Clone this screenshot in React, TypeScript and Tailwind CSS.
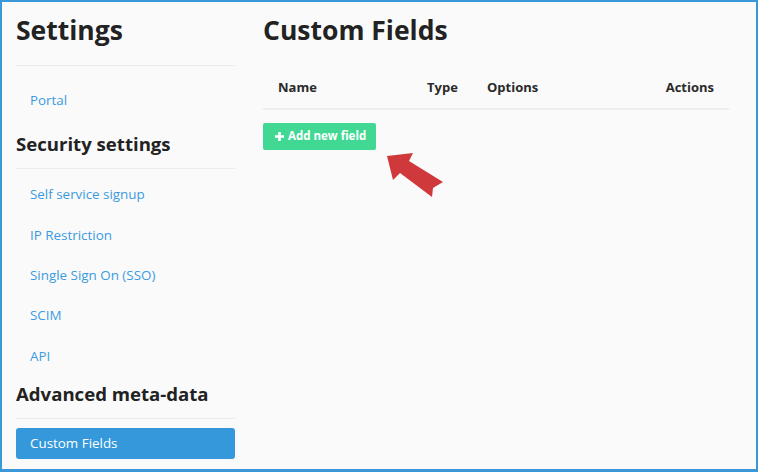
const SECURITY_LINKS = ["Self service signup", "IP Restriction", "Single Sign On (SSO)", "SCIM", "API"]

function SideLink({ label }: { label: string }) {
    return (
        <div className="flex h-[40.3px] items-center pl-[14px] text-[13.4px] leading-[20px] text-[#3a9be0]">
            {label}
        </div>
    )
}

function Divider() {
    return <div className="h-px w-full bg-[#ececec]" />
}

function Arrow() {
    // red annotation arrow pointing at the button
    return (
        <svg
            className="absolute left-[378px] top-[143px]"
            width="70"
            height="60"
            viewBox="0 0 70 60"
        >
            <polygon
                points="7,11 33,8 29,16 63,37 53,43 52,52 20,28 13,35"
                fill="#d0393c"
            />
        </svg>
    )
}

export default function App() {
    return (
        <div
            className="relative flex h-[472px] w-[758px] border-2 border-b-[3px] border-[#3a98d8] bg-[#fafafa] pl-[14px] text-[#222]"
            style={{ fontFamily: '"Open Sans", "Noto Sans", sans-serif' }}
        >
            {/* Sidebar */}
            <aside className="flex w-[219px] flex-col">
                <h1 className="mt-[10px] h-[36px] text-[26.5px] font-bold leading-[36px]">Settings</h1>
                <div className="mt-[17px]">
                    <Divider />
                </div>
                <div className="mt-[14px]">
                    <SideLink label="Portal" />
                </div>

                <h2 className="mt-[10px] text-[18.6px] font-bold leading-[28px]">Security settings</h2>
                <div className="mt-[10px]">
                    <Divider />
                </div>
                <div className="mt-[5px] flex flex-col">
                    {SECURITY_LINKS.map((l) => (
                        <SideLink key={l} label={l} />
                    ))}
                </div>

                <h2 className="mt-[4px] text-[18.6px] font-bold leading-[28px]">Advanced meta-data</h2>
                <div className="mt-[10px]">
                    <Divider />
                </div>
                <div className="mt-[9px] flex h-[31px] items-center rounded-[3px] bg-[#3498db] pl-[14px] text-[13.4px] text-white">
                    Custom Fields
                </div>
            </aside>

            {/* Main */}
            <main className="ml-[28px] flex w-[466px] flex-col">
                <h1 className="mt-[10px] h-[36px] text-[26.5px] font-bold leading-[36px]">Custom Fields</h1>

                <div className="mt-[19px] flex border-b-2 border-[#ededed] pb-[11px] pt-[10px] text-[13px] font-bold leading-[20px] text-[#2a2a2a]">
                    <div className="w-[164px] pl-[15px]">Name</div>
                    <div className="w-[60px]">Type</div>
                    <div className="flex-1">Options</div>
                    <div className="pr-[15px]">Actions</div>
                </div>

                <div className="mt-[13px]">
                    <button className="flex h-[27px] w-[113px] items-center gap-[4px] rounded-[2px] bg-[#41d893] pb-px pl-[12px] text-[11.5px] font-bold text-white">
                        <svg width="9" height="9" viewBox="0 0 9 9">
                            <rect x="3.2" y="0" width="2.6" height="9" fill="white" />
                            <rect x="0" y="3.2" width="9" height="2.6" fill="white" />
                        </svg>
                        Add new field
                    </button>
                </div>
            </main>

            <Arrow />
        </div>
    )
}
